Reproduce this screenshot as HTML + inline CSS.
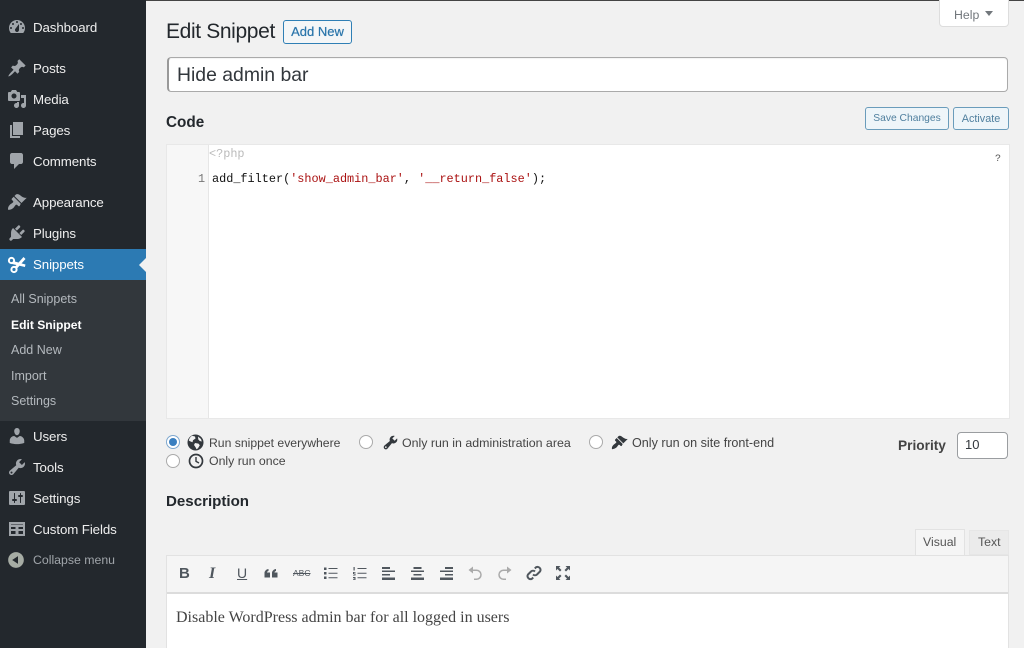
<!DOCTYPE html>
<html lang="en"><head><meta charset="utf-8"><title>Edit Snippet</title>
<style>
html,body{margin:0;padding:0;width:1024px;height:648px;overflow:hidden;background:#f1f1f1}
body{position:relative;font-family:"Liberation Sans",sans-serif;color:#23282d}
.a,.t{position:absolute;white-space:nowrap}
.t{line-height:20px;height:20px}
svg{position:absolute;display:block}
#side{position:absolute;left:0;top:0;width:146px;height:648px;background:#23282d}
#sub{position:absolute;left:0;top:280px;width:146px;height:141px;background:#32373c}
#act{position:absolute;left:0;top:249px;width:146px;height:31px;background:#2c7ab3}
.m{font-size:13.3px;letter-spacing:-.1px;color:#eee;left:33px;margin-top:1px}
.s{font-size:12.5px;color:#b4b9be;left:11px}
.ic path{fill:#a0a5aa}
.btn{position:absolute;box-sizing:border-box;border:1px solid #2f7fb5;border-radius:3px;background:#f3f5f6;color:#2b76ab;text-align:center}
.r{position:absolute;width:14px;height:14px;box-sizing:border-box;border:1px solid #aaa;border-radius:50%;background:#fff}
.o{font-size:12.6px;color:#444}
.tb path{fill:#50575e}
</style></head><body>
<div class="a" style="left:146px;top:0;width:878px;height:1px;background:#444"></div>

<div id="side"></div><div id="sub"></div><div id="act"></div>
<div class="a" style="left:139px;top:258px;width:0;height:0;border:7px solid transparent;border-left:0;border-right:7px solid #f1f1f1"></div>

<svg class="ic" style="left:7px;top:17px" width="20" height="20" viewBox="0 0 20 20"><path d="M3.76 16h12.48c1.1-1.37 1.76-3.11 1.76-5 0-4.42-3.58-8-8-8s-8 3.58-8 8c0 1.89.66 3.63 1.76 5zM10 4c.55 0 1 .45 1 1s-.45 1-1 1-1-.45-1-1 .45-1 1-1zM6 6c.55 0 1 .45 1 1s-.45 1-1 1-1-.45-1-1 .45-1 1-1zm8 0c.55 0 1 .45 1 1s-.45 1-1 1-1-.45-1-1 .45-1 1-1zm-5.37 5.55L12 7v6c0 1.1-.9 2-2 2s-2-.9-2-2c0-.57.24-1.08.63-1.45zM4 10c.55 0 1 .45 1 1s-.45 1-1 1-1-.45-1-1 .45-1 1-1zm12 0c.55 0 1 .45 1 1s-.45 1-1 1-1-.45-1-1 .45-1 1-1z" fill-rule="evenodd"/></svg>
<div class="t m" style="top:17px">Dashboard</div>

<svg class="ic" style="left:7px;top:58px" width="20" height="20" viewBox="0 0 20 20"><path d="M10.44 3.02l1.82-1.82 6.36 6.35-1.83 1.82c-1.05-.68-2.48-.57-3.41.36l-.75.75c-.92.93-1.04 2.35-.35 3.41l-1.83 1.82-2.41-2.41-2.8 2.79c-.42.42-3.38 2.71-3.8 2.29s1.86-3.39 2.28-3.81l2.79-2.79L4.1 9.36l1.83-1.82c1.05.69 2.48.57 3.4-.36l.75-.75c.93-.92 1.05-2.35.36-3.41z"/></svg>
<div class="t m" style="top:58px">Posts</div>

<svg class="ic" style="left:7px;top:89px" width="20" height="20" viewBox="0 0 20 20"><path fill-rule="evenodd" d="M13 11V4c0-.55-.45-1-1-1h-1.67L9 1H5L3.67 3H2c-.55 0-1 .45-1 1v7c0 .55.45 1 1 1h10c.55 0 1-.45 1-1zM7 4.500c1.380 0 2.500 1.120 2.500 2.500S8.380 9.500 7 9.500 4.500 8.380 4.500 7 5.620 4.500 7 4.500zM14 6h5v10.500c0 1.380-1.120 2.500-2.500 2.500S14 17.880 14 16.500s1.120-2.500 2.500-2.500c.17 0 .34.02.5.05V9h-3V6zm-4 8.050V13h2v3.500c0 1.380-1.120 2.500-2.500 2.500S7 17.880 7 16.500 8.120 14 9.500 14c.17 0 .34.02.5.05z"/></svg>
<div class="t m" style="top:89px">Media</div>

<svg class="ic" style="left:7px;top:120px" width="20" height="20" viewBox="0 0 20 20"><path d="M6 15V2h10v13H6zm-1 1h8v2H3V5h2v11z"/></svg>
<div class="t m" style="top:120px">Pages</div>

<svg class="ic" style="left:7px;top:151px" width="20" height="20" viewBox="0 0 20 20"><path d="M5 2h9c1.1 0 2 .9 2 2v7c0 1.1-.9 2-2 2h-2l-5 5v-5H5c-1.1 0-2-.9-2-2V4c0-1.1.9-2 2-2z"/></svg>
<div class="t m" style="top:151px">Comments</div>

<svg class="ic" style="left:7px;top:192px" width="20" height="20" viewBox="0 0 20 20"><path d="M14.48 11.06L7.41 3.99l1.5-1.5c.5-.56 2.3-.47 3.51.32 1.21.8 1.43 1.28 2.91 2.1 1.18.64 2.45 1.26 4.45.85zm-.71.71L6.7 4.7 4.93 6.47c-.39.39-.39 1.02 0 1.41l1.06 1.06c.39.39.39 1.03 0 1.42-.6.6-1.43 1.11-2.21 1.69-.35.26-.7.53-1.01.84-1.43 1.43-2.1 3.2-1.6 4.9.3.3 3.4-.2 5-1.7.33-.32.6-.7.9-1 .58-.78 1.09-1.61 1.69-2.21.39-.39 1.03-.39 1.42 0l1.06 1.06c.39.39 1.02.39 1.41 0z"/></svg>
<div class="t m" style="top:192px">Appearance</div>

<svg class="ic" style="left:7px;top:223px" width="20" height="20" viewBox="0 0 20 20"><path d="M13.11 4.36L9.87 7.6 8 5.73l3.24-3.24c.35-.34 1.05-.2 1.56.32.52.51.66 1.21.31 1.55zm-8 1.77l.91-1.12 9.01 9.01-1.19.84c-.71.71-2.63 1.16-3.82 1.16H6.14L4.9 17.26c-.59.59-1.54.59-2.12 0-.59-.58-.59-1.53 0-2.12l1.24-1.24v-3.88c0-1.13.4-3.19 1.09-3.89zm7.26 3.97l3.24-3.24c.34-.35 1.04-.21 1.55.31.52.51.66 1.21.31 1.55l-3.24 3.25z"/></svg>
<div class="t m" style="top:223px">Plugins</div>

<svg style="left:7px;top:256px" width="19" height="18" viewBox="0 0 19 18"><g fill="none" stroke="#fff" stroke-width="2"><circle cx="4.500" cy="4.500" r="2.600"/><circle cx="7" cy="13.500" r="2.600"/></g><path fill="#fff" d="M6 5l12.500 3.500-.6 2.500L5 8zM8 10.500L16.500 1 18.500 3 10 12.500z"/></svg>
<div class="t m" style="top:254px;color:#fff">Snippets</div>

<div class="t s" style="top:289px">All Snippets</div>
<div class="t s" style="top:315px;color:#fff;font-weight:bold;font-size:12.1px">Edit Snippet</div>
<div class="t s" style="top:340px">Add New</div>
<div class="t s" style="top:366px">Import</div>
<div class="t s" style="top:391px">Settings</div>

<svg class="ic" style="left:7px;top:426px" width="20" height="20" viewBox="0 0 20 20"><path d="M10 9.25c-2.27 0-2.73-3.44-2.73-3.44C7 4.02 7.82 2 9.97 2c2.16 0 2.98 2.02 2.71 3.81 0 0-.41 3.44-2.68 3.44zm0 2.57L12.72 10c2.39 0 4.52 2.33 4.52 4.53v2.49s-3.65 1.13-7.24 1.13c-3.65 0-7.24-1.13-7.24-1.13v-2.49c0-2.25 1.94-4.48 4.47-4.48z"/></svg>
<div class="t m" style="top:426px">Users</div>

<svg class="ic" style="left:7px;top:457px" width="20" height="20" viewBox="0 0 20 20"><path fill-rule="evenodd" d="M16.68 9.77c-1.34 1.34-3.3 1.67-4.95.99l-5.41 6.52c-.99.99-2.59.99-3.58 0s-.99-2.59 0-3.57l6.52-5.42c-.68-1.65-.35-3.61.99-4.95 1.28-1.28 3.12-1.62 4.72-1.06l-2.89 2.89 2.82 2.82 2.86-2.87c.53 1.58.18 3.39-1.08 4.65zM3.81 16.21c.4.39 1.04.39 1.43 0 .4-.4.4-1.04 0-1.43-.39-.4-1.03-.4-1.43 0-.39.39-.39 1.03 0 1.43z"/></svg>
<div class="t m" style="top:457px">Tools</div>

<svg class="ic" style="left:7px;top:488px" width="20" height="20" viewBox="0 0 20 20"><path fill-rule="evenodd" d="M18 16V4c0-.55-.45-1-1-1H3c-.55 0-1 .45-1 1v12c0 .55.45 1 1 1h14c.55 0 1-.45 1-1zM8 11h1c.55 0 1 .45 1 1s-.45 1-1 1H8v1.500c0 .28-.22.5-.5.5s-.5-.22-.5-.5V13H6c-.55 0-1-.45-1-1s.45-1 1-1h1V5.500c0-.28.22-.5.5-.5s.5.22.5.5V11zm5-2h-1c-.55 0-1-.45-1-1s.45-1 1-1h1V5.500c0-.28.22-.5.5-.5s.5.22.5.5V7h1c.55 0 1 .45 1 1s-.45 1-1 1h-1v5.500c0 .28-.22.5-.5.5s-.5-.22-.5-.5V9z"/></svg>
<div class="t m" style="top:488px">Settings</div>

<svg class="ic" style="left:7px;top:519px" width="20" height="20" viewBox="0 0 20 20"><path fill-rule="evenodd" d="M2 3h16v14H2zM4 5.500V6h12v-.5zM4 8v2h4.500V8zM11.500 8v2H16V8zM4 12v3h4.500v-3zM11.500 12v3H16v-3z"/></svg>
<div class="t m" style="top:519px">Custom Fields</div>

<svg style="left:6px;top:550px" width="20" height="20" viewBox="0 0 20 20"><path fill="#a6aca4" fill-rule="evenodd" d="M10 2.160c4.330 0 7.840 3.510 7.840 7.840s-3.510 7.840-7.840 7.840S2.160 14.330 2.160 10 5.710 2.160 10 2.160zm2 11.720V6.120L6.180 9.970z"/></svg>
<div class="t" style="left:33px;top:550px;font-size:12.3px;color:#a0a5aa">Collapse menu</div>

<div class="a" style="left:939px;top:-1px;width:70px;height:28px;box-sizing:border-box;background:#fff;border:1px solid #ddd;border-radius:0 0 4px 4px"></div>
<div class="t" style="left:954px;top:5px;font-size:12.300px;color:#72777c">Help</div>
<div class="a" style="left:985px;top:11px;width:0;height:0;border:4px solid transparent;border-bottom:0;border-top:5px solid #72777c"></div>

<div class="t" style="left:166px;top:21px;height:22px;line-height:22px;font-size:21px;letter-spacing:-.36px;color:#23282d">Edit Snippet</div>
<div class="btn" style="left:283px;top:20px;width:69px;height:24px;line-height:22px;font-size:13px;background:#f4f6f7;text-shadow:0 0 .5px #2b76ab">Add New</div>

<div class="a" style="left:167px;top:57px;width:841px;height:35px;box-sizing:border-box;background:#fff;border:1px solid #aaa;border-left:2px solid #999;border-radius:4px;box-shadow:inset 0 1px 1px rgba(0,0,0,.05)"></div>
<div class="t" style="left:177px;top:64px;height:22px;line-height:22px;font-size:19.400px;color:#32373c">Hide admin bar</div>

<div class="t" style="left:166px;top:113px;font-size:15.300px;font-weight:bold;color:#23282d">Code</div>
<div class="btn" style="left:865px;top:107px;width:84px;height:23px;line-height:22px;font-size:10.300px;background:#eef5f9;border-color:#6a9cbb;color:#4f7f9e">Save Changes</div>
<div class="btn" style="left:953px;top:107px;width:56px;height:23px;line-height:22px;font-size:10.800px;background:#eef5f9;border-color:#6a9cbb;color:#4f7f9e">Activate</div>

<div class="a" style="left:166px;top:144px;width:844px;height:275px;box-sizing:border-box;background:#fff;border:1px solid #e8e8e8"></div>
<div class="a" style="left:167px;top:145px;width:41px;height:273px;background:#f7f7f7;border-right:1px solid #e6e6e6"></div>
<div class="t" style="left:209px;top:144px;font:11.850px/20px 'Liberation Mono',monospace;color:#bbb">&lt;?php</div>
<div class="t" style="left:198px;top:169px;font:11.850px/20px 'Liberation Mono',monospace;color:#777">1</div>
<div class="t" style="left:212px;top:169px;font:11.850px/20px 'Liberation Mono',monospace;color:#111">add_filter(<span style="color:#a11">'show_admin_bar'</span>, <span style="color:#a11">'__return_false'</span>);</div>
<div class="t" style="left:995px;top:150px;font:10px/20px 'Liberation Mono',monospace;color:#555">?</div>

<div class="r" style="left:166px;top:435px;border-color:#7fa8cf"></div>
<div class="a" style="left:169px;top:438px;width:8px;height:8px;border-radius:50%;background:#3a7fc0"></div>
<svg style="left:187px;top:434px" width="17" height="17" viewBox="0 0 17 17"><circle cx="8.500" cy="8.500" r="8" fill="#33383d"/><path fill="#f1f1f1" d="M5 1.800l3 .7.5 2-2.500 1.700-.5 2L3 7.300 1.800 6.500C2.200 4.500 3.300 2.800 5 1.800zM8 9l3.500.6 1.300 1.700-1.800 3-1.500 1-1-2.200L7 11zM11 2.500l3 2.500.8 2.500-2-.5-1.500-1.500z"/></svg>
<div class="t o" style="left:209px;top:432.500px;font-size:12.200px">Run snippet everywhere</div>

<div class="r" style="left:359px;top:435px"></div>
<svg style="left:382px;top:434px" width="17" height="17" viewBox="0 0 20 20"><path fill="#33383d" fill-rule="evenodd" d="M16.680 9.770c-1.340 1.340-3.300 1.670-4.950.99l-5.410 6.520c-.99.99-2.590.99-3.580 0s-.99-2.590 0-3.570l6.520-5.420c-.68-1.650-.35-3.610.99-4.950 1.280-1.280 3.120-1.620 4.720-1.060l-2.890 2.890 2.820 2.820 2.860-2.870c.53 1.580.18 3.390-1.080 4.650zM3.810 16.210c.4.39 1.040.39 1.430 0 .4-.4.4-1.040 0-1.430-.39-.4-1.030-.4-1.430 0-.39.39-.39 1.030 0 1.430z"/></svg>
<div class="t o" style="left:402px;top:432.500px;font-size:12.400px">Only run in administration area</div>

<div class="r" style="left:589px;top:435px"></div>
<svg style="left:611px;top:434px" width="17" height="17" viewBox="0 0 20 20"><path fill="#33383d" d="M14.480 11.060L7.410 3.990l1.500-1.500c.5-.56 2.300-.47 3.510.32 1.210.8 1.430 1.280 2.910 2.100 1.180.64 2.450 1.260 4.450.85zm-.71.71L6.700 4.700 4.930 6.470c-.39.39-.39 1.020 0 1.410l1.060 1.060c.39.39.39 1.030 0 1.420-.6.6-1.430 1.110-2.210 1.690-.35.26-.7.53-1.010.84-1.430 1.430-2.100 3.200-1.600 4.900.3.3 3.400-.2 5-1.700.33-.32.6-.7.9-1 .58-.78 1.090-1.610 1.690-2.210.39-.39 1.030-.39 1.420 0l1.060 1.060c.39.39 1.020.39 1.410 0z"/></svg>
<div class="t o" style="left:632px;top:432.500px">Only run on site front-end</div>

<div class="r" style="left:166px;top:454px"></div>
<svg style="left:188px;top:453px" width="16" height="16" viewBox="0 0 16 16"><circle cx="8" cy="8" r="6.500" fill="none" stroke="#33383d" stroke-width="1.700"/><path d="M8 4v4.300l3 1.700" fill="none" stroke="#33383d" stroke-width="1.400"/></svg>
<div class="t o" style="left:209px;top:451px;font-size:12.300px">Only run once</div>

<div class="t" style="left:898px;top:436px;font-size:13.700px;font-weight:bold;color:#444">Priority</div>
<div class="a" style="left:957px;top:432px;width:51px;height:27px;box-sizing:border-box;background:#fff;border:1px solid #9a9da0;border-radius:4px"></div>
<div class="t" style="left:965px;top:435px;font-size:13px;color:#32373c">10</div>

<div class="t" style="left:166px;top:492px;font-size:15.100px;font-weight:bold;color:#23282d">Description</div>

<div class="a" style="left:915px;top:529px;width:50px;height:27px;box-sizing:border-box;background:#f5f5f5;border:1px solid #e2e2e2;border-bottom:0"></div>
<div class="t" style="left:923px;top:532px;font-size:12.300px;color:#555">Visual</div>
<div class="a" style="left:969px;top:530px;width:40px;height:25px;box-sizing:border-box;background:#ebebeb;border:1px solid #e6e6e6"></div>
<div class="t" style="left:978px;top:532px;font-size:12.300px;color:#555">Text</div>

<div class="a" style="left:166px;top:555px;width:843px;height:93px;box-sizing:border-box;background:#fff;border:1px solid #e2e2e2;border-bottom:0"></div>
<div class="a" style="left:167px;top:556px;width:841px;height:36px;background:#f5f5f5;border-bottom:2px solid #dcdcdc"></div>
<div class="t" style="left:176px;top:608px;font:16px/20px 'Liberation Serif',serif;color:#444">Disable WordPress admin bar for all logged in users</div>

<div class="t" style="left:179px;top:564px;font-size:15px;font-weight:bold;color:#50575e">B</div>
<div class="t" style="left:209px;top:564px;font:italic bold 16px/20px 'Liberation Serif',serif;color:#50575e">I</div>
<div class="t" style="left:237px;top:563px;font-size:14px;color:#50575e;text-decoration:underline">U</div>
<svg class="tb" style="left:263px;top:565px" width="16" height="16" viewBox="0 0 16 16"><path d="M1.500 7.500C2 5.500 3.500 4.200 5.500 4v2c-1 .2-1.500.8-1.500 1.500h3v5H1.500zM9 7.500c.5-2 2-3.300 4-3.500v2c-1 .2-1.500.8-1.500 1.500h3v5H9z"/></svg>
<div class="t" style="left:293px;top:563px;font-size:8.500px;color:#50575e;text-decoration:line-through">ABC</div>
<svg class="tb" style="left:323px;top:566px" width="15" height="15" viewBox="0 0 15 15"><path d="M1 1.500h2.500v2.500H1zM1 6h2.500v2.500H1zM1 10.500h2.500V13H1zM5.500 2h9v1h-9zM5.500 6.800h9v1h-9zM5.500 11.300h9v1h-9z"/></svg>
<svg class="tb" style="left:352px;top:566px" width="15" height="15" viewBox="0 0 15 15"><path d="M1.500 1h1.200v3.500H1.500zM1 6h2.500v.8H2v.7h1.500v2H1v-.8h1.500V8H1zM1 11h2.500v3H1v-.7h1.600V13H1.500v-.5h1.100V12H1zM5.500 2h9v1h-9zM5.500 6.800h9v1h-9zM5.500 11.300h9v1h-9z"/></svg>
<svg class="tb" style="left:381px;top:566px" width="15" height="15" viewBox="0 0 15 15"><path d="M1 1h8v2H1zM1 4.500h13v1.500H1zM1 8h8v1.500H1zM1 11.500h13V14H1z"/></svg>
<svg class="tb" style="left:410px;top:566px" width="15" height="15" viewBox="0 0 15 15"><path d="M3.500 1h8v2h-8zM1 4.500h13v1.500H1zM3.500 8h8v1.500h-8zM1 11.500h13V14H1z"/></svg>
<svg class="tb" style="left:439px;top:566px" width="15" height="15" viewBox="0 0 15 15"><path d="M6 1h8v2H6zM1 4.500h13v1.500H1zM6 8h8v1.500H6zM1 11.500h13V14H1z"/></svg>
<svg style="left:467px;top:565px" width="16" height="16" viewBox="0 0 16 16"><path d="M6 1.500L1.500 5 6 8.500V6h3.500a3 3 0 0 1 0 7.500H7v1.500h2.500a4.500 4.500 0 0 0 0-10.500H6z" fill="#aaa"/></svg>
<svg style="left:497px;top:565px" width="16" height="16" viewBox="0 0 16 16"><path d="M10 1.500L14.500 5 10 8.500V6H6.500a3 3 0 0 0 0 7.500H9v1.500H6.500a4.500 4.500 0 0 1 0-10.500H10z" fill="#aaa"/></svg>
<svg style="left:526px;top:565px" width="16" height="16" viewBox="0 0 16 16"><g fill="none" stroke="#50575e" stroke-width="2"><path d="M7 9.500a3 3 0 0 0 4 0l3-3a3 3 0 0 0-4-4.200L8.800 3.500"/><path d="M9 6.500a3 3 0 0 0-4 0l-3 3a3 3 0 0 0 4 4.200l1.200-1.200"/></g></svg>
<svg style="left:555px;top:565px" width="16" height="16" viewBox="0 0 16 16"><path fill="#50575e" d="M1 1h4.500L4 2.500 6.500 5 5 6.500 2.500 4 1 5.500zM15 1v4.500L13.500 4 11 6.500 9.500 5 12 2.500 10.500 1zM1 15v-4.500L2.500 12 5 9.500 6.500 11 4 13.500 5.500 15zM15 15h-4.500l1.500-1.500L9.500 11 11 9.500l2.500 2.500 1.500-1.500z"/></svg>
</body></html>
